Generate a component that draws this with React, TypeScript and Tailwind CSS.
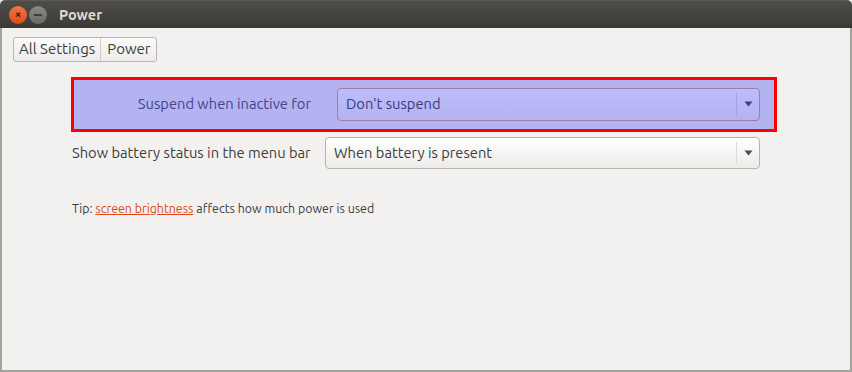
const font = "font-['Ubuntu','Open_Sans','DejaVu_Sans',sans-serif]";

function Arrow({ color }: { color: string }) {
  return (
    <svg width="9" height="6" viewBox="0 0 9 6">
      <path d="M0.5 0.5h8L4.5 5.5z" fill={color} />
    </svg>
  );
}

const App = () => {
  return (
    <div className={`w-[852px] h-[372px] flex flex-col bg-[#f2f1f0] ${font}`}>
      {/* title bar */}
      <div className="h-[28px] flex items-center gap-[2px] pl-[9px] bg-gradient-to-b from-[#4e4d49] to-[#3b3a36] rounded-t-[5px] border-t border-[#5a5955]">
        <div className="w-[18px] h-[18px] rounded-full bg-gradient-to-b from-[#f07746] to-[#df4a16] flex items-center justify-center text-[#3a1a0a] text-[11px] font-bold leading-none">
          ×
        </div>
        <div className="w-[18px] h-[18px] rounded-full bg-gradient-to-b from-[#8a8984] to-[#6b6a66] flex items-center justify-center">
          <div className="w-[8px] h-[2px] bg-[#3c3b37]" />
        </div>
        <span className="ml-[10px] text-[14.5px] font-bold text-[#dfdbd2]">Power</span>
      </div>

      {/* body */}
      <div className="flex-1 flex flex-col border-x-2 border-b-2 border-[#a3a29e]">
        <div className="pt-[8px] pl-[11px]">
          <div className="inline-flex h-[25px] rounded-[3px] border border-[#b9b7b2] bg-gradient-to-b from-[#fbfbfa] to-[#ecebe9] text-[15px] text-[#3c3c3c]">
            <span className="px-[5px] flex items-center border-r border-[#cfcdc8]">All Settings</span>
            <span className="px-[6px] flex items-center">Power</span>
          </div>
        </div>

        <div className="mt-[15px] ml-[69px] w-[706px] h-[55px] border-[3px] border-[#ff0000] bg-[#b3b3f2] flex items-center">
          <span className="w-[237px] text-right text-[14.7px] text-[#44448a] whitespace-nowrap">Suspend when inactive for</span>
          <div className="ml-[26px] w-[423px] h-[33px] rounded-[4px] border border-[#a57a9a] bg-gradient-to-b from-[#bdbdfc] to-[#b3b3f2] flex items-center">
            <span className="flex-1 pl-[8px] text-[14.7px] text-[#38387a]">Don't suspend</span>
            <div className="w-px h-[22px] bg-[#a3a3dc]" />
            <div className="w-[22px] flex justify-center">
              <Arrow color="#3e3e78" />
            </div>
          </div>
        </div>

        <div className="mt-[5px] ml-[70px] flex items-center h-[32px]">
          <span className="w-[253px] text-[14.7px] text-[#3c3c3c] whitespace-nowrap">Show battery status in the menu bar</span>
          <div className="w-[435px] h-[32px] rounded-[4px] border border-[#b5b3ae] bg-gradient-to-b from-[#ffffff] to-[#ecebe9] flex items-center">
            <span className="flex-1 pl-[8px] text-[14.7px] text-[#3c3c3c]">When battery is present</span>
            <div className="w-px h-[22px] bg-[#dcdad5]" />
            <div className="w-[22px] flex justify-center">
              <Arrow color="#4a4a4a" />
            </div>
          </div>
        </div>

        <div className="mt-[30px] ml-[70px] text-[12.4px] text-[#3c3c3c]">
          Tip: <span className="text-[#dd4814] underline">screen brightness</span> affects how much power is used
        </div>
      </div>
    </div>
  );
};

export default App;
